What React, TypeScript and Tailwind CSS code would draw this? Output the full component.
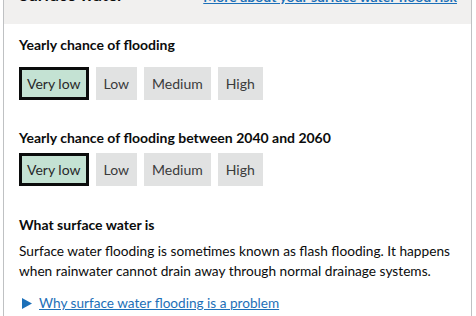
import React from 'react';

const levels = ['Very low', 'Low', 'Medium', 'High'];

const RiskScale = ({ title, active, gap }: { title: string; active: string; gap: string }) => (
  <div>
    <h3 className="text-[14px] font-bold leading-[20px]">{title}</h3>
    <div className={`flex gap-[7px] ${gap}`}>
      {levels.map(l =>
        l === active ? (
          <div
            key={l}
            className="h-[33px] px-[5px] flex items-center border-[3px] border-[#0b0c0c] bg-[#c4e2d3] text-[14px] text-[#28292a]"
          >
            {l}
          </div>
        ) : (
          <div
            key={l}
            className="h-[33px] px-[8px] flex items-center bg-[#e1e2e2] text-[14px] text-[#3a3b3c]"
          >
            {l}
          </div>
        )
      )}
    </div>
  </div>
);

export default function App() {
  return (
    <div className="w-[476px] h-[316px] overflow-hidden bg-white text-[#0b0c0c] font-['Lato',sans-serif]">
      <div className="ml-[3px] w-[469px] h-full border-x border-[#bfc1c3]">
        {/* header, cut off by the top edge */}
        <div className="h-[24px] bg-[#f1f0ef] overflow-hidden flex items-end justify-between pl-[15px] pr-[14px] whitespace-nowrap">
          <span className="text-[17px] font-bold leading-[20px] mb-[19px]">Surface water</span>
          <a href="#" className="text-[14px] font-bold text-[#1d70b8] underline leading-[16px] mb-[19px]">
            More about your surface water flood risk
          </a>
        </div>

        <div className="px-[15px] pt-[11px]">
          <RiskScale title="Yearly chance of flooding" active="Very low" gap="mt-[12px]" />
          <div className="mt-[28px]">
            <RiskScale title="Yearly chance of flooding between 2040 and 2060" active="Very low" gap="mt-[5px]" />
          </div>

          <h3 className="mt-[29px] text-[14px] font-bold leading-[20px]">What surface water is</h3>
          <p className="mt-[6px] text-[13.7px] leading-[20px]">
            Surface water flooding is sometimes known as flash flooding. It happens when rainwater cannot
            drain away through normal drainage systems.
          </p>
          <div className="mt-[12px] flex items-center gap-[7px] pl-[3px]">
            <svg width="10" height="11" viewBox="0 0 10 11" className="shrink-0">
              <path d="M0 0 L10 5.5 L0 11 Z" fill="#1d70b8" />
            </svg>
            <a href="#" className="text-[13.6px] text-[#1d70b8] underline leading-[20px]">
              Why surface water flooding is a problem
            </a>
          </div>
        </div>
      </div>
    </div>
  );
}
